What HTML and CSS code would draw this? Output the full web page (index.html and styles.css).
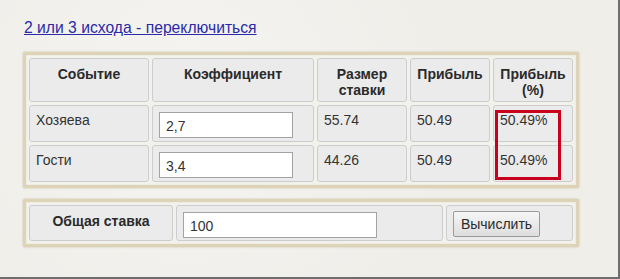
FILE: index.html
```html
<!DOCTYPE html>
<html lang="ru">
<head>
<meta charset="utf-8">
<title>Калькулятор вилок</title>
<link rel="stylesheet" href="styles.css">
</head>
<body>
<div class="page">
  <a class="switch" href="#">2 или 3 исхода - переключиться</a>
  <div class="panel panel-main">
    <table class="grid">
      <tr class="head">
        <th class="c1">Событие</th>
        <th class="c2">Коэффициент</th>
        <th class="c3">Размер<br>ставки</th>
        <th class="c4">Прибыль</th>
        <th class="c5">Прибыль<br>(%)</th>
      </tr>
      <tr class="row">
        <td>Хозяева</td>
        <td><input class="field field-odd" type="text" value="2,7"></td>
        <td>55.74</td>
        <td>50.49</td>
        <td>50.49%</td>
      </tr>
      <tr class="row">
        <td>Гости</td>
        <td><input class="field field-odd" type="text" value="3,4"></td>
        <td>44.26</td>
        <td>50.49</td>
        <td>50.49%</td>
      </tr>
    </table>
    <div class="highlight"></div>
  </div>
  <div class="panel panel-total">
    <table class="grid">
      <tr class="row total-row">
        <th class="t1">Общая ставка</th>
        <td class="t2"><input class="field field-total" type="text" value="100"></td>
        <td class="t3"><button class="calc" type="button">Вычислить</button></td>
      </tr>
    </table>
  </div>
</div>
</body>
</html>
```

FILE: styles.css
```css
html, body {
  margin: 0;
  padding: 0;
}
body {
  background: #efeee9;
  font-family: "Liberation Sans", Arial, sans-serif;
  color: #333;
}
.page {
  box-sizing: border-box;
  width: 620px;
  height: 279px;
  padding: 18px 0 0 23px;
  border-right: 2px solid #6e6e6e;
  border-bottom: 2px solid #6e6e6e;
  background:
    radial-gradient(circle at 30% 40%, rgba(255,255,255,0.35), rgba(255,255,255,0) 60%),
    #efeee9;
}
.switch {
  display: block;
  width: fit-content;
  margin-left: 1px;
  font-size: 15.7px;
  line-height: 19px;
  color: #2a2aa8;
  text-decoration: underline;
}
.panel {
  position: relative;
  width: 550px;
  margin-top: 15px;
  border: 3px solid #ddd3b6;
  border-radius: 2px;
  background: #f2f1ec;
  box-shadow: 0 0 2px rgba(160, 140, 90, 0.55), inset 0 0 1px rgba(160, 140, 90, 0.4);
}
.panel-total {
  margin-top: 11px;
}
.grid {
  border-collapse: separate;
  border-spacing: 3px;
  table-layout: fixed;
  width: 550px;
}
.grid th, .grid td {
  box-sizing: border-box;
  background: #ebebeb;
  border: 1px solid #cdcdcd;
  border-radius: 3px;
  font-size: 14px;
  line-height: 16px;
  vertical-align: top;
  padding: 6px 6px 0;
  text-align: left;
  font-weight: normal;
  color: #333;
}
.grid th {
  font-weight: bold;
  text-align: center;
  color: #2a2a2a;
  padding-top: 7px;
}
.head th {
  height: 44px;
}
.row td, .row th {
  height: 37px;
}
.total-row td, .total-row th {
  height: 36px;
}
.c1 { width: 120px; }
.c2 { width: 162px; }
.c3 { width: 90px; }
.c4 { width: 80px; }
.c5 { width: 80px; }
.t1 { width: 144px; }
.t2 { width: 267px; }
.t3 { width: 127px; }
.grid td:has(.field) {
  padding-top: 6px;
}
.field {
  box-sizing: border-box;
  height: 26px;
  border: 1px solid #a3a3a3;
  background: #fff;
  font-family: "Liberation Sans", Arial, sans-serif;
  font-size: 14px;
  color: #333;
  padding: 2px 6px 0;
  margin: 0;
  outline: none;
}
.field-odd {
  width: 134px;
}
.field-total {
  width: 194px;
}
.grid td.t3 {
  padding-top: 5px;
}
.calc {
  box-sizing: border-box;
  height: 26px;
  width: 87px;
  border: 1px solid #9a9a9a;
  border-radius: 2px;
  background: linear-gradient(#f6f6f6, #dedede);
  font-family: "Liberation Sans", Arial, sans-serif;
  font-size: 14px;
  color: #2a2a2a;
  padding: 0;
  margin: 0;
}
.highlight {
  position: absolute;
  left: 469px;
  top: 55px;
  width: 66px;
  height: 70px;
  box-sizing: border-box;
  border: 3px solid #c8001d;
  pointer-events: none;
}
```
